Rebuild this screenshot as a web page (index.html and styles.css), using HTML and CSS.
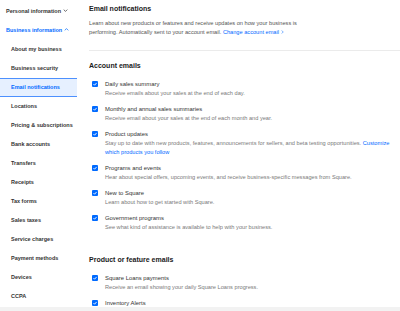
FILE: index.html
```html
<!DOCTYPE html>
<html lang="en">
<head>
    <meta charset="UTF-8">
    <meta name="viewport" content="width=device-width, initial-scale=1.0">
    <title>Email notifications</title>
    <link rel="stylesheet" href="styles.css">
</head>
<body>
    <div class="page">
        <nav class="sidebar">
            <a href="#" class="nav-group">Personal information
                <svg class="chev" viewBox="0 0 8 5"><path d="M1 1l3 3 3-3" /></svg>
            </a>
            <a href="#" class="nav-group open">Business information
                <svg class="chev" viewBox="0 0 8 5"><path d="M1 4l3-3 3 3" /></svg>
            </a>
            <div class="nav-list">
                <a href="#" class="nav-item">About my business</a>
                <a href="#" class="nav-item">Business security</a>
                <a href="#" class="nav-item active">Email notifications</a>
                <a href="#" class="nav-item">Locations</a>
                <a href="#" class="nav-item">Pricing &amp; subscriptions</a>
                <a href="#" class="nav-item">Bank accounts</a>
                <a href="#" class="nav-item">Transfers</a>
                <a href="#" class="nav-item">Receipts</a>
                <a href="#" class="nav-item">Tax forms</a>
                <a href="#" class="nav-item">Sales taxes</a>
                <a href="#" class="nav-item">Service charges</a>
                <a href="#" class="nav-item">Payment methods</a>
                <a href="#" class="nav-item">Devices</a>
                <a href="#" class="nav-item">CCPA</a>
            </div>
        </nav>

        <main class="content">
            <section class="intro">
                <h1>Email notifications</h1>
                <p>Learn about new products or features and receive updates on how your business is performing. Automatically sent to your account email. <a href="#" class="nowrap">Change account email<svg class="chev-r" viewBox="0 0 5 8"><path d="M1 1l3 3-3 3" /></svg></a></p>
            </section>

            <h2>Account emails</h2>
            <ul class="options">
                <li>
                    <span class="check"><svg viewBox="0 0 10 10"><path d="M2.5 5.2l1.8 1.8 3.4-3.8" /></svg></span>
                    <div>
                        <div class="opt-title">Daily sales summary</div>
                        <div class="opt-desc">Receive emails about your sales at the end of each day.</div>
                    </div>
                </li>
                <li>
                    <span class="check"><svg viewBox="0 0 10 10"><path d="M2.5 5.2l1.8 1.8 3.4-3.8" /></svg></span>
                    <div>
                        <div class="opt-title">Monthly and annual sales summaries</div>
                        <div class="opt-desc">Receive email about your sales at the end of each month and year.</div>
                    </div>
                </li>
                <li>
                    <span class="check"><svg viewBox="0 0 10 10"><path d="M2.5 5.2l1.8 1.8 3.4-3.8" /></svg></span>
                    <div>
                        <div class="opt-title">Product updates</div>
                        <div class="opt-desc">Stay up to date with new products, features, announcements for sellers, and beta testing opportunities. <a href="#">Customize which products you follow</a></div>
                    </div>
                </li>
                <li>
                    <span class="check"><svg viewBox="0 0 10 10"><path d="M2.5 5.2l1.8 1.8 3.4-3.8" /></svg></span>
                    <div>
                        <div class="opt-title">Programs and events</div>
                        <div class="opt-desc">Hear about special offers, upcoming events, and receive business-specific messages from Square.</div>
                    </div>
                </li>
                <li>
                    <span class="check"><svg viewBox="0 0 10 10"><path d="M2.5 5.2l1.8 1.8 3.4-3.8" /></svg></span>
                    <div>
                        <div class="opt-title">New to Square</div>
                        <div class="opt-desc">Learn about how to get started with Square.</div>
                    </div>
                </li>
                <li>
                    <span class="check"><svg viewBox="0 0 10 10"><path d="M2.5 5.2l1.8 1.8 3.4-3.8" /></svg></span>
                    <div>
                        <div class="opt-title">Government programs</div>
                        <div class="opt-desc">See what kind of assistance is available to help with your business.</div>
                    </div>
                </li>
            </ul>

            <h2 class="spaced">Product or feature emails</h2>
            <ul class="options">
                <li>
                    <span class="check"><svg viewBox="0 0 10 10"><path d="M2.5 5.2l1.8 1.8 3.4-3.8" /></svg></span>
                    <div>
                        <div class="opt-title">Square Loans payments</div>
                        <div class="opt-desc">Receive an email showing your daily Square Loans progress.</div>
                    </div>
                </li>
                <li>
                    <span class="check"><svg viewBox="0 0 10 10"><path d="M2.5 5.2l1.8 1.8 3.4-3.8" /></svg></span>
                    <div>
                        <div class="opt-title">Inventory Alerts</div>
                    </div>
                </li>
            </ul>
        </main>
    </div>
    <div class="bottom-bar"></div>
</body>
</html>
```

FILE: styles.css
```css
body {
    font-family: 'Liberation Sans', Arial, sans-serif;
    margin: 0;
    padding: 0;
    background-color: #fff;
    color: #1a1a1a;
    height: 311px;
    display: flex;
    flex-direction: column;
    overflow: hidden;
}

a {
    text-decoration: none;
}

.page {
    flex: 1;
    display: flex;
    overflow: hidden;
}

/* sidebar */
.sidebar {
    width: 80px;
    flex-shrink: 0;
    padding-top: 1px;
}

.nav-group {
    display: flex;
    align-items: center;
    gap: 2px;
    height: 19px;
    padding-left: 6px;
    font-size: 5.5px;
    font-weight: 600;
    color: #333;
}

.nav-group.open {
    color: #006aff;
}

.chev {
    width: 5px;
    height: 3px;
    fill: none;
    stroke: currentColor;
    stroke-width: 1.2;
}

.nav-list {
    display: flex;
    flex-direction: column;
    padding-top: 0.5px;
}

.nav-item {
    display: flex;
    align-items: center;
    height: 19px;
    box-sizing: border-box;
    padding-left: 11px;
    font-size: 5.5px;
    font-weight: 600;
    color: #333;
}

.nav-item.active {
    background-color: #e6f0ff;
    color: #006aff;
    border-top: 1px solid #4d90fe;
    border-bottom: 1px solid #4d90fe;
    margin-right: 3px;
}

/* main content */
.content {
    flex: 1;
    padding-left: 9px;
    padding-top: 4px;
}

.intro {
    border-bottom: 1px solid #ebebeb;
    padding-bottom: 13px;
}

h1 {
    margin: 0;
    font-size: 7px;
    line-height: 10px;
    font-weight: 700;
}

.intro p {
    margin: 4.5px 0 0;
    width: 222px;
    font-size: 5.65px;
    line-height: 9px;
    color: #555;
}

.intro a,
.opt-desc a {
    color: #006aff;
}

.nowrap {
    white-space: nowrap;
}

.chev-r {
    width: 3px;
    height: 4px;
    fill: none;
    stroke: currentColor;
    stroke-width: 1.1;
    margin-left: 2px;
}

h2 {
    margin: 10px 0 8px;
    font-size: 7px;
    line-height: 10px;
    font-weight: 700;
}

h2.spaced {
    margin-top: 23px;
}

.options {
    list-style: none;
    margin: 0;
    padding: 0 0 0 3px;
}

.options li {
    display: flex;
    gap: 7px;
    margin-bottom: 6px;
}

.check {
    width: 6px;
    height: 6px;
    flex-shrink: 0;
    margin-top: 2px;
    border-radius: 1px;
    background-color: #006aff;
    display: flex;
}

.check svg {
    width: 6px;
    height: 6px;
    fill: none;
    stroke: #fff;
    stroke-width: 1.5;
}

.opt-title {
    font-size: 5.9px;
    line-height: 10px;
    color: #333;
}

.opt-desc {
    font-size: 5.65px;
    line-height: 9px;
    color: #7a7a7a;
    max-width: 292px;
}

.bottom-bar {
    height: 4px;
    background-color: #f2f2f2;
    flex-shrink: 0;
}
```
